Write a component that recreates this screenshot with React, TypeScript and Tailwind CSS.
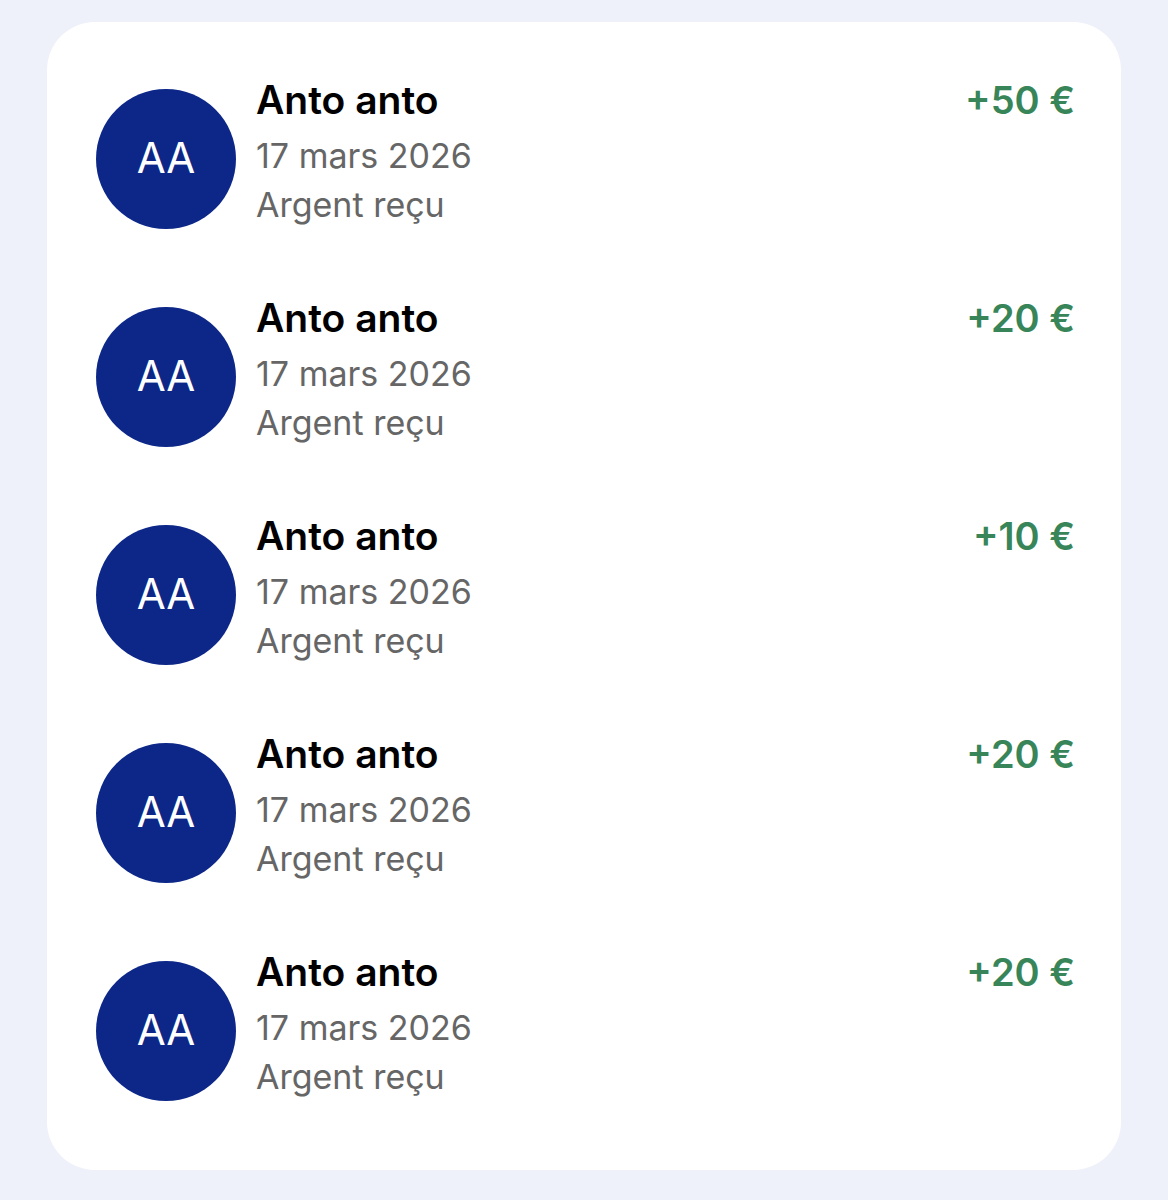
type Transaction = {
  id: number;
  name: string;
  initials: string;
  date: string;
  label: string;
  amount: string;
};

const transactions: Transaction[] = [
  { id: 1, name: "Anto anto", initials: "AA", date: "17 mars 2026", label: "Argent reçu", amount: "+50 €" },
  { id: 2, name: "Anto anto", initials: "AA", date: "17 mars 2026", label: "Argent reçu", amount: "+20 €" },
  { id: 3, name: "Anto anto", initials: "AA", date: "17 mars 2026", label: "Argent reçu", amount: "+10 €" },
  { id: 4, name: "Anto anto", initials: "AA", date: "17 mars 2026", label: "Argent reçu", amount: "+20 €" },
  { id: 5, name: "Anto anto", initials: "AA", date: "17 mars 2026", label: "Argent reçu", amount: "+20 €" },
];

function Avatar({ initials }: { initials: string }) {
  return (
    <div className="grid size-[140px] shrink-0 place-items-center rounded-full bg-[#0c2788] pb-1 text-[42px] text-white">
      {initials}
    </div>
  );
}

function TransactionRow({ t }: { t: Transaction }) {
  return (
    <li className="flex items-start gap-5">
      <div className="pt-3">
        <Avatar initials={t.initials} />
      </div>
      <div className="min-w-0 flex-1">
        <p className="text-[39px] leading-[46px] font-semibold text-black">{t.name}</p>
        <p className="mt-2 text-[34px] leading-[49px] text-[#666666]">{t.date}</p>
        <p className="text-[34px] leading-[49px] text-[#666666]">{t.label}</p>
      </div>
      <p className="shrink-0 text-[38px] leading-[46px] font-semibold text-[#378558]">{t.amount}</p>
    </li>
  );
}

export default function App() {
  return (
    <main className="min-h-screen bg-[#eef1fa] px-[47px] pt-[22px] pb-[30px] font-['Inter',sans-serif]">
      <ul className="flex flex-col gap-[66px] rounded-[48px] bg-white pt-[55px] pr-[46px] pb-[69px] pl-[49px]">
        {transactions.map((t) => (
          <TransactionRow key={t.id} t={t} />
        ))}
      </ul>
    </main>
  );
}
